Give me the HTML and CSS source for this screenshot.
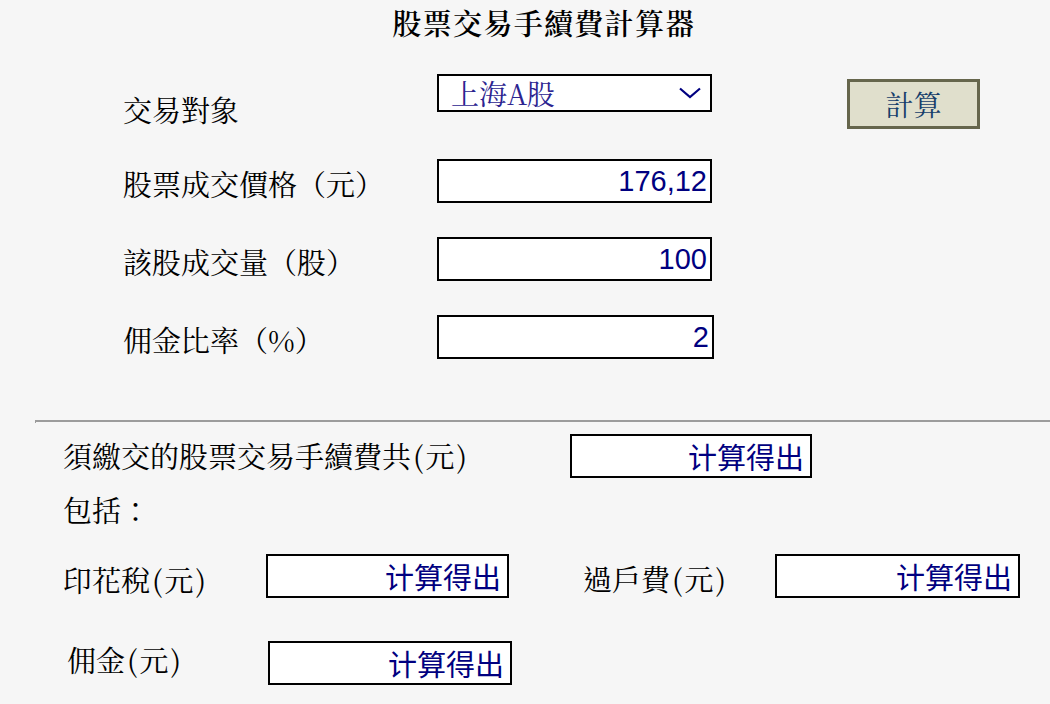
FILE: index.html
```html
<!DOCTYPE html>
<html lang="zh-Hant">
<head>
<meta charset="utf-8">
<title>股票交易手續費計算器</title>
<link rel="stylesheet" href="styles.css">
</head>
<body>
<div class="title">股票交易手續費計算器</div>

<div class="form">
  <div class="label label-first">交易對象</div>
  <div class="select">
    <span class="select-text">上海A股</span>
    <svg class="chevron" width="24" height="12" viewBox="0 0 24 12"><path d="M2 1.5 L12 10 L22 1.5" fill="none" stroke="#000080" stroke-width="2.2"/></svg>
  </div>
  <button class="calc-btn" type="button">計算</button>

  <div class="label">股票成交價格（元）</div>
  <input class="num" type="text" value="176,12">
  <div></div>

  <div class="label">該股成交量（股）</div>
  <input class="num" type="text" value="100">
  <div></div>

  <div class="label">佣金比率（%）</div>
  <input class="num num-wide" type="text" value="2">
  <div></div>
</div>

<hr class="divider">

<div class="results">
  <div class="row-total">
    <div class="label total-label">須繳交的股票交易手續費共<span class="p">(</span>元<span class="p">)</span></div>
    <div class="out out-total">计算得出</div>
  </div>
  <div class="label include">包括：</div>
  <div class="row-detail">
    <div class="label detail-label">印花稅<span class="p">(</span>元<span class="p">)</span></div>
    <div class="out">计算得出</div>
    <div class="label detail-label detail-label2">過戶費<span class="p">(</span>元<span class="p">)</span></div>
    <div class="out out-wide">计算得出</div>
  </div>
  <div class="row-detail row-last">
    <div class="label detail-label last-label">佣金<span class="p">(</span>元<span class="p">)</span></div>
    <div class="out out-last">计算得出</div>
  </div>
</div>
</body>
</html>
```

FILE: styles.css
```css
html, body {
  margin: 0;
  padding: 0;
  background: #f6f6f6;
}

body {
  font-family: "Noto Serif CJK TC", "Noto Sans CJK TC", "Noto Sans CJK SC", serif;
  color: #000;
  width: 1050px;
  height: 704px;
  overflow: hidden;
}

.title {
  font-size: 29px;
  line-height: 36px;
  letter-spacing: 1.3px;
  font-weight: 600;
  text-align: center;
  padding-top: 5px;
  padding-left: 38px;
}

.form {
  display: grid;
  grid-template-columns: 314px 277px auto;
  grid-template-rows: 51px 44px 44px 44px;
  row-gap: 34px;
  padding-left: 123px;
  margin-top: 33px;
}

.label {
  font-size: 29px;
  line-height: 36px;
  white-space: nowrap;
}

.p {
  margin: 0 2px;
}

.form .label {
  align-self: center;
  padding-top: 5px;
}

.form .label-first {
  align-self: start;
  padding-top: 18px;
}

.select {
  box-sizing: border-box;
  width: 275px;
  height: 38px;
  border: 2px solid #000;
  background: #fff;
  display: flex;
  align-items: center;
  justify-content: space-between;
  padding: 0 8px 0 12px;
  align-self: start;
}

.select-text {
  font-size: 28px;
  line-height: 34px;
  color: #2c2490;
}

.chevron {
  display: block;
}

.calc-btn {
  box-sizing: border-box;
  width: 133px;
  height: 50px;
  margin-left: 133px;
  margin-top: 5px;
  align-self: start;
  background: #e0dfcc;
  border: 3px solid #66664c;
  font-family: inherit;
  font-size: 28px;
  line-height: 36px;
  color: #153d6a;
  padding: 0;
  cursor: pointer;
}

.num {
  box-sizing: border-box;
  width: 275px;
  height: 44px;
  border: 2px solid #000;
  background: #fff;
  text-align: right;
  font-family: "Liberation Sans", Arial, sans-serif;
  font-size: 29px;
  color: #000080;
  padding: 0 3px 0 4px;
  margin: 0;
  outline: none;
}

.num-wide {
  width: 277px;
}

.divider {
  margin: 61px 0 0 35px;
  height: 1px;
  border: 0;
  border-top: 2px solid #9c9c9c;
  border-left: 1px solid #9c9c9c;
  padding: 0;
}

.results {
  padding-left: 63px;
  display: flex;
  flex-direction: column;
}

.row-total {
  display: flex;
  align-items: center;
  margin-top: 11px;
}

.total-label {
  width: 507px;
}

.out {
  box-sizing: border-box;
  width: 243px;
  height: 44px;
  border: 2px solid #000;
  background: #fff;
  text-align: right;
  font-family: "Noto Sans CJK SC", "Noto Sans CJK TC", sans-serif;
  font-size: 29px;
  line-height: 40px;
  color: #000080;
  padding-right: 6px;
}

.out-total {
  width: 242px;
}

.out-wide {
  width: 245px;
}

.out-last {
  width: 244px;
}

.include {
  margin-top: 14px;
}

.row-detail {
  display: flex;
  align-items: center;
  margin-top: 26px;
}

.detail-label {
  width: 203px;
  margin-top: 8px;
}

.detail-label2 {
  width: 192px;
  margin-left: 74px;
  margin-top: 6px;
}

.row-last {
  margin-top: 43px;
}

.last-label {
  width: 201px;
  padding-left: 4px;
  margin-top: 0;
  margin-bottom: 6px;
}
```
